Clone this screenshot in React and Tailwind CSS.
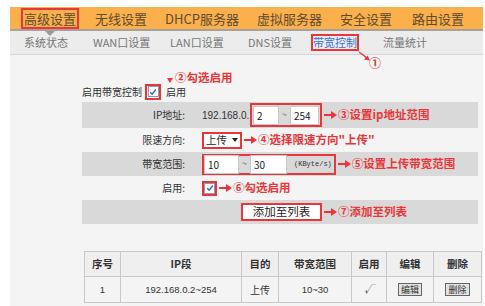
import React from 'react';

const RED = '#e8363a';

const Arrow = () => (
  <span className="flex items-center">
    <span className="w-[7px] h-[2px] bg-[#e8363a]" />
    <span className="w-0 h-0 border-y-[4px] border-y-transparent border-l-[6px] border-l-[#e8363a]" />
  </span>
);

const Callout = ({ children }) => (
  <div className="flex items-center gap-[1px] ml-[2px] text-[11.5px] leading-none font-bold text-[#e8363a] whitespace-nowrap">
    <Arrow />
    <span>{children}</span>
  </div>
);

const Check = () => (
  <div className="w-[11px] h-[11px] bg-white border border-[#8c9bb3] flex items-center justify-center">
    <svg width="8" height="8" viewBox="0 0 8 8">
      <polyline points="1.2,4.2 3.2,6.2 6.8,1.5" fill="none" stroke="#3564b5" strokeWidth="1.4" />
    </svg>
  </div>
);

const Field = ({ w, children }) => (
  <div className={`${w} h-[19px] bg-white border border-[#c9c9c9] flex items-center pl-[3px] text-[10px] text-[#222]`}>
    {children}
  </div>
);

const Row = ({ cls, label, children }) => (
  <div className={`flex items-center ${cls}`}>
    <div className="w-[103px] text-right text-[10px] text-[#333] leading-none">{label}</div>
    <div className="flex items-center pl-[17px]">{children}</div>
  </div>
);

const topMenu = [
  { label: '高级设置', w: 'w-[72px]', active: true },
  { label: '无线设置', w: 'w-[70px]' },
  { label: 'DHCP服务器', w: 'w-[92px]' },
  { label: '虚拟服务器', w: 'w-[83px]' },
  { label: '安全设置', w: 'w-[72px]' },
  { label: '路由设置', w: 'w-[60px]' },
];

const subMenu = [
  { label: '系统状态', w: 'w-[69px]' },
  { label: 'WAN口设置', w: 'w-[77px]' },
  { label: 'LAN口设置', w: 'w-[78px]' },
  { label: 'DNS设置', w: 'w-[65px]' },
  { label: '带宽控制', w: 'w-[70px]', active: true },
  { label: '流量统计', w: 'w-[60px]' },
];

export default function App() {
  return (
    <div className="relative w-[485px] h-[306px] bg-white overflow-hidden font-['Noto_Sans_CJK_SC',sans-serif]">
      <div className="ml-[10px] mt-[7px] w-[473px] h-[299px] bg-[#f4f4f4]">
        {/* top menu */}
        <div className="h-[24px] bg-[#fbb04c] border-b-2 border-[#a7a199] flex items-center pl-[11px]">
          {topMenu.map((m) => (
            <div key={m.label} className={`${m.w} flex`}>
              <span
                className={`h-[21px] flex items-center border-2 text-[13px] leading-none text-[#5e4b32] whitespace-nowrap ${
                  m.active ? 'border-[#e8363a] px-[1px]' : 'border-transparent'
                }`}
              >
                {m.label}
              </span>
            </div>
          ))}
        </div>

        {/* sub menu */}
        <div className="relative h-[24px] bg-[#ececec] border-b border-[#d6d6d6] flex items-center pl-[12px]">
          <span className="absolute left-[35px] top-0 w-0 h-0 border-x-[5px] border-x-transparent border-t-[5px] border-t-[#9a9a9a]" />
          {subMenu.map((s) => (
            <div key={s.label} className={`${s.w} flex`}>
              <span
                className={`border-2 py-[1px] text-[11px] leading-none whitespace-nowrap ${
                  s.active ? 'border-[#e8363a] text-[#3a6fd8]' : 'border-transparent text-[#777]'
                }`}
              >
                {s.label}
              </span>
            </div>
          ))}
        </div>

        {/* form */}
        <div className="pt-[26px] pl-[72px]">
          <div className="w-[396px]">
            <div className="h-[21px] flex items-center text-[10px] text-[#333] leading-none">
              <span>启用带宽控制</span>
              <div className="ml-[3px] w-[16px] h-[16px] border-2 border-[#e8363a] flex items-center justify-center">
                <Check />
              </div>
              <span className="ml-[5px]">启用</span>
            </div>

            <Row cls="h-[26px] bg-[#d9d9d9]" label="IP地址:">
              <span className="text-[10px] text-[#333] w-[48px] font-['Liberation_Sans',sans-serif]">192.168.0.</span>
              <div className="h-[24px] border-2 border-[#e8363a] flex items-center px-[1px]">
                <Field w="w-[26px]">2</Field>
                <span className="mx-[3px] text-[9px] text-[#555]">~</span>
                <Field w="w-[29px]">254</Field>
              </div>
              <Callout>③设置ip地址范围</Callout>
            </Row>

            <Row cls="h-[24px]" label="限速方向:">
              <div className="w-[40px] h-[17px] border-2 border-[#e8363a] bg-white flex items-center px-[2px] text-[10.5px] leading-none text-[#222]">
                <span>上传</span>
                <span className="ml-auto w-0 h-0 border-x-[3px] border-x-transparent border-t-[4px] border-t-[#222]" />
              </div>
              <Callout>④选择限速方向"上传"</Callout>
            </Row>

            <Row cls="h-[24px] bg-[#d9d9d9]" label="带宽范围:">
              <div className="h-[21px] border-2 border-[#e8363a] flex items-center">
                <Field w="w-[35px]">10</Field>
                <span className="mx-[3px] text-[9px] text-[#555]">~</span>
                <Field w="w-[37px]">30</Field>
                <span className="ml-[7px] mr-[2px] text-[7px] text-[#333] font-['Liberation_Mono',monospace]">(KByte/s)</span>
              </div>
              <Callout>⑤设置上传带宽范围</Callout>
            </Row>

            <Row cls="h-[24px]" label="启用:">
              <div className="w-[15px] h-[15px] border-2 border-[#e8363a] flex items-center justify-center">
                <Check />
              </div>
              <Callout>⑥勾选启用</Callout>
            </Row>

            <Row cls="h-[24px] bg-[#d9d9d9]" label="">
              <div className="ml-[39px] w-[81px] h-[18px] bg-white border-2 border-[#e8363a] flex items-center justify-center text-[11.5px] leading-none text-[#222]">
                添加至列表
              </div>
              <Callout>⑦添加至列表</Callout>
            </Row>
          </div>

          {/* table */}
          <table className="mt-[27px] ml-[2px] w-[397px] table-fixed border-collapse text-[#333]">
            <colgroup>
              <col className="w-[36px]" />
              <col className="w-[121px]" />
              <col className="w-[37px]" />
              <col className="w-[73px]" />
              <col className="w-[35px]" />
              <col className="w-[47px]" />
              <col className="w-[48px]" />
            </colgroup>
            <thead>
              <tr className="h-[25px] bg-[#efefef]">
                {['序号', 'IP段', '目的', '带宽范围', '启用', '编辑', '删除'].map((h) => (
                  <th key={h} className="border border-[#c8c8c8] text-[10.5px] font-bold leading-none">
                    {h}
                  </th>
                ))}
              </tr>
            </thead>
            <tbody>
              <tr className="h-[26px] bg-[#f4f4f4] text-center text-[9.5px] leading-none">
                <td className="border border-[#c8c8c8] font-['Liberation_Sans',sans-serif]">1</td>
                <td className="border border-[#c8c8c8] font-['Liberation_Sans',sans-serif]">192.168.0.2~254</td>
                <td className="border border-[#c8c8c8] text-[10px]">上传</td>
                <td className="border border-[#c8c8c8] font-['Liberation_Sans',sans-serif]">10~30</td>
                <td className="border border-[#c8c8c8] italic">√</td>
                <td className="border border-[#c8c8c8]">
                  <span className="inline-block px-[2px] py-[1px] bg-[#e2e2e2] border border-[#666] text-[9px]">编辑</span>
                </td>
                <td className="border border-[#c8c8c8]">
                  <span className="inline-block px-[2px] py-[1px] bg-[#e2e2e2] border border-[#666] text-[9px]">删除</span>
                </td>
              </tr>
            </tbody>
          </table>
        </div>
      </div>

      {/* callout ①: arrow from 带宽控制 tab */}
      <svg className="absolute left-[358px] top-[51px]" width="14" height="12" viewBox="0 0 14 12">
        <line x1="1" y1="1" x2="9" y2="7" stroke={RED} strokeWidth="1.5" />
        <polygon points="12,9.5 6,8.5 9.5,4.5" fill={RED} />
      </svg>
      <div className="absolute left-[369px] top-[57px] text-[12px] leading-none font-bold text-[#e8363a]">①</div>

      {/* callout ② */}
      <span className="absolute left-[167px] top-[78px] w-0 h-0 border-x-[3px] border-x-transparent border-t-[5px] border-t-[#e8363a]" />
      <div className="absolute left-[175px] top-[72px] text-[11.5px] leading-none font-bold text-[#e8363a] whitespace-nowrap">
        ②勾选启用
      </div>
    </div>
  );
}
